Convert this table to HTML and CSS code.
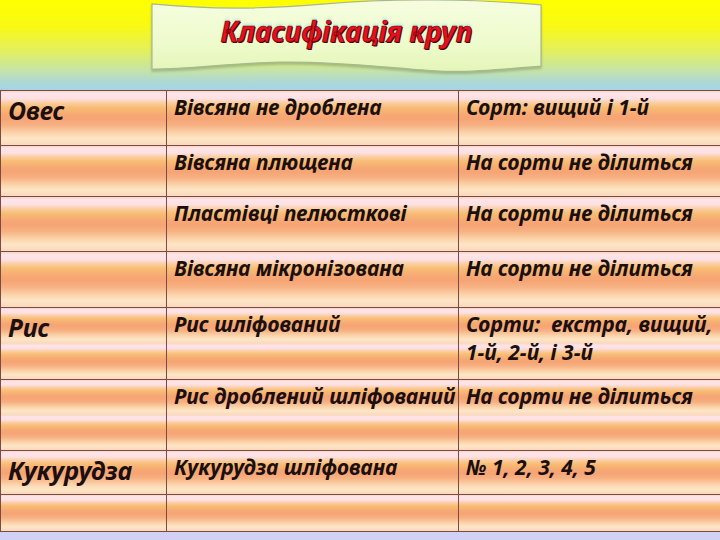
FILE: index.html
```html
<!DOCTYPE html>
<html lang="uk">
<head>
<meta charset="utf-8">
<title>Класифікація круп</title>
<link rel="stylesheet" href="styles.css">
</head>
<body>
<div class="page">
  <header class="top">
    <div class="banner">
      <svg class="wave" viewBox="0 0 392 76" preserveAspectRatio="none" aria-hidden="true">
        <defs>
          <linearGradient id="bfill" x1="0" y1="0" x2="0" y2="1">
            <stop offset="0" stop-color="#f6fde0"/>
            <stop offset="0.6" stop-color="#eefbcc"/>
            <stop offset="1" stop-color="#e4f6b8"/>
          </linearGradient>
        </defs>
        <path d="M1,4 C50,9 110,10 175,4 C240,-2 330,-1 391,5 L391,67 C350,70 320,74 289,72 C250,70 190,62 129,63 C80,64 40,70 1,70 Z" fill="url(#bfill)" stroke="#a9b894" stroke-width="1.2"/>
      </svg>
      <h1 class="title">Класифікація круп</h1>
    </div>
  </header>

  <div class="table">
    <div class="cell name">Овес</div>
    <div class="cell kind">Вівсяна не дроблена</div>
    <div class="cell sort">Сорт: вищий і 1-й</div>

    <div class="cell name"></div>
    <div class="cell kind">Вівсяна плющена</div>
    <div class="cell sort">На сорти не ділиться</div>

    <div class="cell name"></div>
    <div class="cell kind">Пластівці пелюсткові</div>
    <div class="cell sort">На сорти не ділиться</div>

    <div class="cell name"></div>
    <div class="cell kind">Вівсяна мікронізована</div>
    <div class="cell sort">На сорти не ділиться</div>

    <div class="cell name tall">Рис</div>
    <div class="cell kind tall">Рис шліфований</div>
    <div class="cell sort tall">Сорти:&nbsp; екстра, вищий,<br>1-й, 2-й, і 3-й</div>

    <div class="cell name tall"></div>
    <div class="cell kind tall">Рис дроблений шліфований</div>
    <div class="cell sort tall">На сорти не ділиться</div>

    <div class="cell name">Кукурудза</div>
    <div class="cell kind">Кукурудза шліфована</div>
    <div class="cell sort">№ 1, 2, 3, 4, 5</div>

    <div class="cell name"></div>
    <div class="cell kind"></div>
    <div class="cell sort"></div>
  </div>
  <div class="foot"></div>
</div>
</body>
</html>
```

FILE: styles.css
```css
html, body {
  margin: 0;
  padding: 0;
}

body {
  width: 720px;
  height: 540px;
  overflow: hidden;
  background: #d3d0f6;
  font-family: "Noto Sans", "DejaVu Sans", sans-serif;
  color: #1b0f0f;
}

.page {
  display: flex;
  flex-direction: column;
  width: 720px;
  height: 540px;
}

.top {
  height: 90px;
  flex: none;
  box-sizing: border-box;
  display: flex;
  align-items: flex-start;
  padding-left: 151px;
  background: linear-gradient(180deg,
    #ffff00 0px,
    #f9f914 26px,
    #e4f05c 50px,
    #c6e4a6 70px,
    #acd8d6 82px,
    #a4d5e4 90px);
}

.banner {
  position: relative;
  width: 391px;
  height: 75px;
  display: flex;
  justify-content: center;
}

.wave {
  position: absolute;
  left: 0;
  top: 0;
  width: 100%;
  height: 100%;
  filter: drop-shadow(0 2px 1px rgba(90, 110, 60, 0.35));
}

.title {
  position: relative;
  margin: 0;
  padding-top: 17px;
  font-family: "Noto Sans", "DejaVu Sans", sans-serif;
  font-style: italic;
  font-weight: 700;
  font-size: 28px;
  line-height: 1;
  color: #e8101c;
  -webkit-text-stroke: 0.6px #6a0008;
  text-shadow: 1px 1px 0 #4a0000, 0 -2px 3px rgba(150, 220, 230, 0.6);
}

.table {
  flex: none;
  display: grid;
  grid-template-columns: 167px 292px 261px;
  grid-template-rows: 55px 51px 55px 56px 72px 71px 44px 37px;
  border-top: 1px solid #7c4a46;
}

.cell {
  box-sizing: border-box;
  border-bottom: 1px solid #7c4a46;
  line-height: 28px;
  font-style: italic;
  font-weight: 700;
  white-space: nowrap;
  background-image: linear-gradient(180deg,
    #fbd6c2 0%,
    #fde5ea 5%,
    #fde0e2 14%,
    #fbcfa8 21%,
    #f8be74 30%,
    #f6a874 44%,
    #f6a474 52%,
    #f7b284 64%,
    #fbd2a8 77%,
    #fde6c6 88%,
    #fad8bc 100%);
  background-size: 100% 100%;
  background-repeat: no-repeat;
}

.cell.tall {
  background-size: 100% 50%;
  background-repeat: repeat-y;
}

.name {
  border-left: 1px solid #7c4a46;
  border-right: 1px solid #7c4a46;
  padding: 5px 7px 0;
  font-size: 25px;
}

.kind {
  border-right: 1px solid #7c4a46;
  padding: 2px 7px 0;
  font-size: 21px;
}

.sort {
  padding: 2px 7px 0;
  font-size: 21px;
}

.foot {
  flex: 1;
  background: #d3d0f6;
}
```
